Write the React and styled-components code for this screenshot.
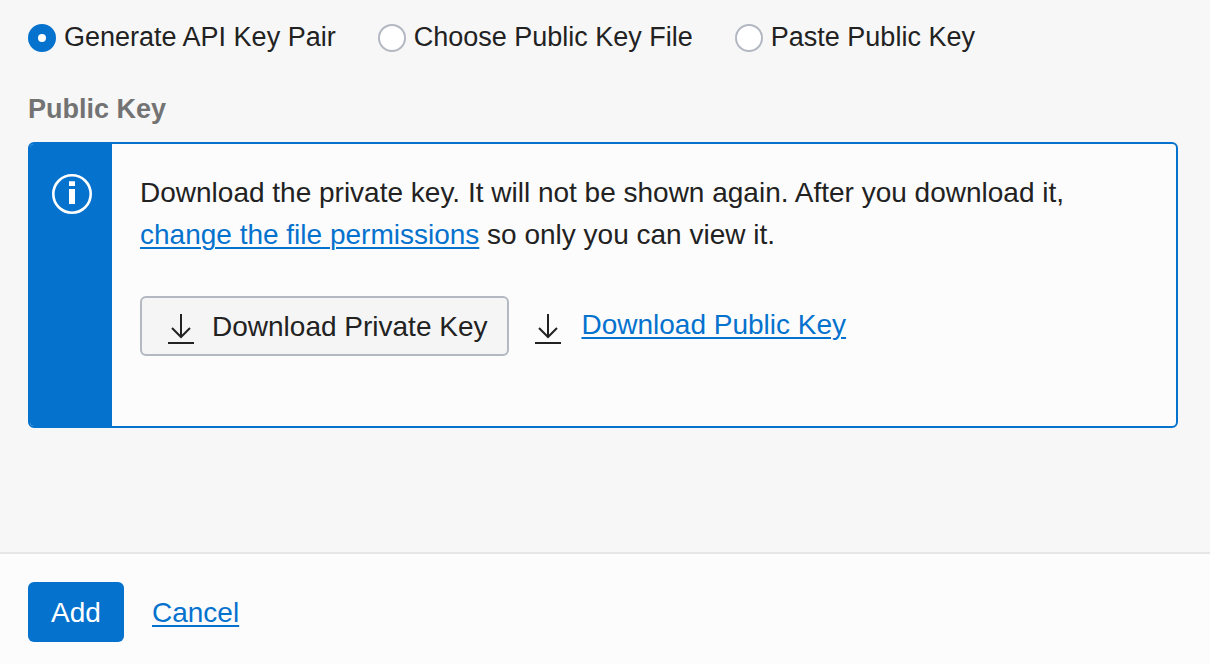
import React, { useState } from "react";
import styled, { createGlobalStyle } from "styled-components";

const blue = "#0572ce";
const ink = "#222222";

const GlobalStyle = createGlobalStyle`
  *, *::before, *::after { box-sizing: border-box; }
  body {
    margin: 0;
    background: #f7f7f7;
    color: ${ink};
    font: 400 28px/42px "Liberation Sans", Arial, sans-serif;
  }
`;

const Page = styled.div`
  display: flex;
  flex-direction: column;
  min-height: 100vh;
`;

const Content = styled.main`
  flex: 1;
  padding: 16px 32px 32px 28px;
`;

const RadioGroup = styled.fieldset`
  display: flex;
  flex-wrap: wrap;
  gap: 8px 42px;
  margin: 0;
  padding: 0;
  border: 0;
  font-size: 27px;
`;

const Option = styled.label`
  display: flex;
  align-items: center;
  gap: 8px;
  white-space: nowrap;
`;

const Radio = styled.input`
  appearance: none;
  flex: none;
  width: 28px;
  height: 28px;
  margin: 2px 0 0;
  border: 2px solid #b3b8c2;
  border-radius: 50%;
  background: #ffffff;

  &:checked {
    border: 10px solid ${blue};
  }
`;

const Heading = styled.h2`
  margin: 30px 0 12px;
  color: #737373;
  font-size: 27px;
  font-weight: 700;
  line-height: 42px;
`;

const Notice = styled.section`
  display: flex;
  min-height: 286px;
  overflow: hidden;
  border: 2px solid ${blue};
  border-radius: 6px;
  background: #fcfcfc;
`;

const NoticeSide = styled.div`
  flex: none;
  width: 82px;
  padding: 30px 0 0 22px;
  background: ${blue};
`;

const NoticeBody = styled.div`
  flex: 1;
  padding: 28px 28px 68px;
`;

const Message = styled.p`
  margin: 0;
`;

const Link = styled.a`
  color: ${blue};
  text-decoration-thickness: 2px;
  text-underline-offset: 3px;
`;

const Actions = styled.div`
  display: flex;
  flex-wrap: wrap;
  align-items: center;
  gap: 26px;
  margin-top: 40px;
`;

const Button = styled.button`
  display: inline-flex;
  align-items: center;
  justify-content: center;
  gap: 18px;
  min-width: 96px;
  height: 60px;
  padding: ${(p) => (p.$primary ? "2px 22px 0" : "2px 20px 0 26px")};
  border: ${(p) => (p.$primary ? "0" : "2px solid #b3b8c2")};
  border-radius: 6px;
  background: ${(p) => (p.$primary ? blue : "#f5f5f5")};
  color: ${(p) => (p.$primary ? "#ffffff" : ink)};
  font: inherit;
  white-space: nowrap;
  cursor: pointer;
`;

const DownloadLink = styled.span`
  display: inline-flex;
  align-items: center;
  gap: 20px;
  padding-top: 2px;
  white-space: nowrap;

  a { padding-bottom: 4px; }
`;

const Glyph = styled.svg`
  display: block;
  flex: none;
`;

const ArrowGlyph = styled(Glyph)`
  margin-top: 4px;
`;

const Footer = styled.footer`
  display: flex;
  align-items: center;
  gap: 28px;
  padding: 28px 28px 22px;
  border-top: 2px solid #e6e6e6;
  background: #fcfcfc;

  a { padding-top: 2px; }
`;

const DownloadIcon = () => (
  <ArrowGlyph width="26" height="30" viewBox="0 0 26 30" fill="none" stroke={ink} strokeWidth="2" aria-hidden="true">
    <path d="M13 0v23M4 14l9 9 9-9M0 29h26" />
  </ArrowGlyph>
);

const InfoIcon = () => (
  <Glyph width="40" height="40" viewBox="0 0 40 40" fill="none" aria-hidden="true">
    <circle cx="20" cy="20" r="18.7" stroke="#fff" strokeWidth="2.6" />
    <path d="M17 7.3h6v4.7h-6zM17 15h6v15h-6z" fill="#fff" />
  </Glyph>
);

const options = ["Generate API Key Pair", "Choose Public Key File", "Paste Public Key"];

export default function App() {
  const [selected, setSelected] = useState(options[0]);
  return (
    <Page>
      <GlobalStyle />
      <Content>
        <RadioGroup aria-label="Key source">
          {options.map((name) => (
            <Option key={name}>
              <Radio type="radio" name="source" checked={selected === name} onChange={() => setSelected(name)} />
              {name}
            </Option>
          ))}
        </RadioGroup>
        <Heading>Public Key</Heading>
        <Notice>
          <NoticeSide>
            <InfoIcon />
          </NoticeSide>
          <NoticeBody>
            <Message>
              Download the private key. It will not be shown again. After you download it,{" "}
              <Link href="#permissions">change the file permissions</Link> so only you can view it.
            </Message>
            <Actions>
              <Button type="button">
                <DownloadIcon />
                Download Private Key
              </Button>
              <DownloadLink>
                <DownloadIcon />
                <Link href="#public-key">Download Public Key</Link>
              </DownloadLink>
            </Actions>
          </NoticeBody>
        </Notice>
      </Content>
      <Footer>
        <Button type="submit" $primary>Add</Button>
        <Link href="#cancel">Cancel</Link>
      </Footer>
    </Page>
  );
}
